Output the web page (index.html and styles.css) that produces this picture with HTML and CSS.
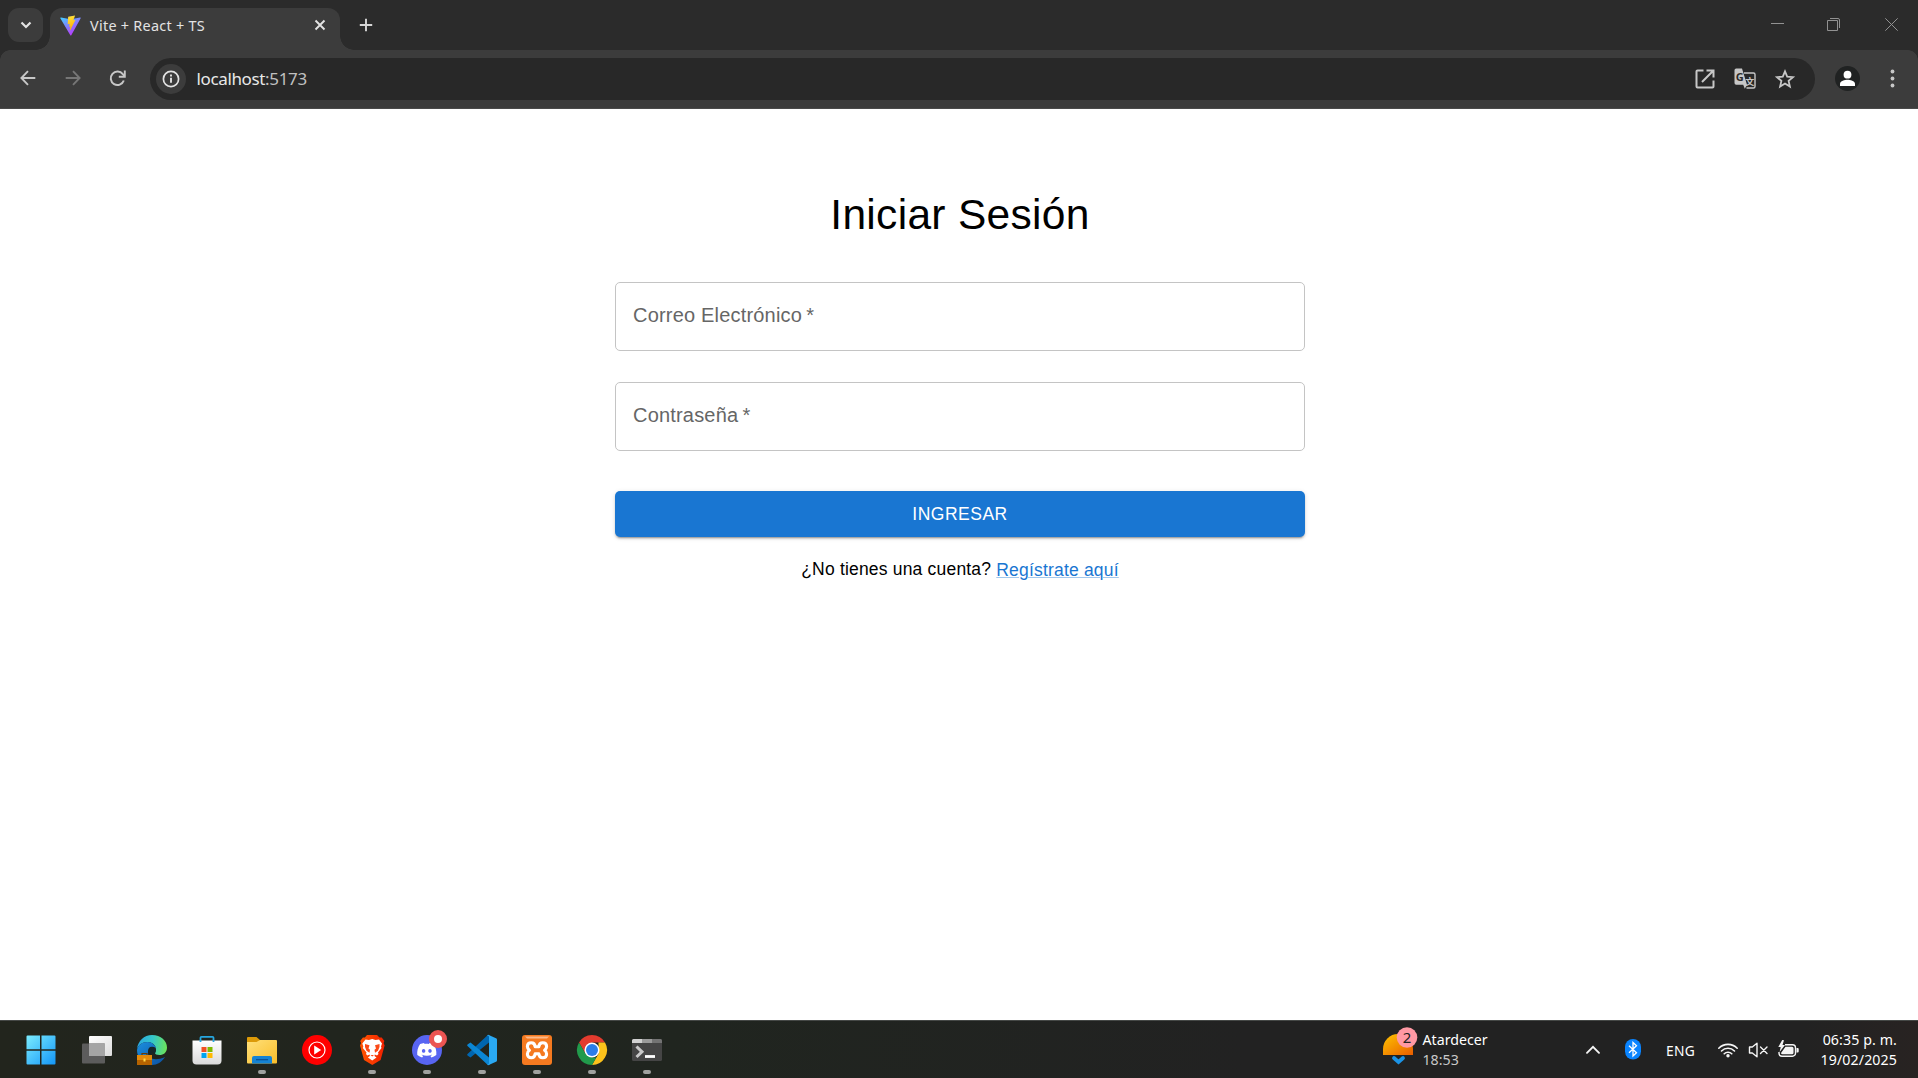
FILE: index.html
```html
<!DOCTYPE html>
<html lang="es">
<head>
<meta charset="utf-8">
<title>Vite + React + TS</title>
<link rel="stylesheet" href="styles.css">
</head>
<body>
<div class="screen">
  <header class="tabstrip">
    <div class="tab-search"><svg width="12" height="8" viewBox="0 0 12 8"><path d="M1.500 1.500 6 6l4.500-4.500" fill="none" stroke="#e3e3e3" stroke-width="2.200"/></svg></div>
    <div class="tab">
      <svg class="favicon" width="21" height="21" viewBox="0 0 32 32">
        <defs>
          <linearGradient id="vp" x1="0" y1="0" x2=".6" y2="1"><stop offset="0" stop-color="#41d1ff"/><stop offset="1" stop-color="#bd34fe"/></linearGradient>
          <linearGradient id="vy" x1="0.4" y1="0" x2=".6" y2="1"><stop offset="0" stop-color="#ffea83"/><stop offset=".1" stop-color="#ffdd35"/><stop offset="1" stop-color="#ffa800"/></linearGradient>
        </defs>
        <path d="M31.500 5 17.200 30.800a.9.9 0 0 1-1.500 0L.5 5a.9.9 0 0 1 1-1.300l14.700 2.600 14.500-2.600a.9.9 0 0 1 .8 1.300z" fill="url(#vp)"/>
        <path d="M23 .8 12.500 2.800l-.8 11.300 3-.6-.8 4.300 2-.5-1.100 5.700c0 .6.500.6.800.2l7.900-15.700-3.200.6z" fill="url(#vy)"/>
      </svg>
      <span class="tab-title">Vite + React + TS</span>
      <svg class="tab-close" width="12" height="12" viewBox="0 0 12 12"><path d="m1.500 1.500 9 9m0-9-9 9" stroke="#e3e3e3" stroke-width="1.900"/></svg>
    </div>
    <svg class="tab-new" width="14" height="14" viewBox="0 0 14 14"><path d="M7 .8v12.400M.8 7h12.400" stroke="#d6d6d6" stroke-width="1.900"/></svg>
    <div class="window-controls">
      <span><svg width="13" height="13" viewBox="0 0 13 13"><path d="M0 5.500h13" stroke="#929292"/></svg></span>
      <span><svg width="13" height="13" viewBox="0 0 13 13"><path d="M.5 2.500h10v10H.5zM3 .5h8a1.500 1.500 0 0 1 1.500 1.500v8" fill="none" stroke="#929292"/></svg></span>
      <span><svg width="13" height="13" viewBox="0 0 13 13"><path d="m.3.3 12.400 12.400m0-12.400L.3 12.700" stroke="#929292"/></svg></span>
    </div>
  </header>

  <div class="toolbar">
    <span class="tool"><svg width="16" height="16" viewBox="0 0 16 16"><path d="M15.300 8H1.800M8 1.200 1.400 8 8 14.800" fill="none" stroke="#c7c7c7" stroke-width="1.900"/></svg></span>
    <span class="tool"><svg width="16" height="16" viewBox="0 0 16 16"><path d="M.7 8h13.500M8 1.200 14.600 8 8 14.800" fill="none" stroke="#767676" stroke-width="1.900"/></svg></span>
    <span class="tool"><svg width="17" height="17" viewBox="0 0 17 17"><path d="M14.800 10.500A6.700 6.700 0 1 1 13.800 4.200L15.500 6" fill="none" stroke="#c7c7c7" stroke-width="2"/><path d="M9.800 6.800h6V.6" fill="none" stroke="#c7c7c7" stroke-width="1.900"/></svg></span>
    <div class="omnibox">
      <span class="site-info"><svg width="18" height="18" viewBox="0 0 18 18"><circle cx="9" cy="9" r="7.600" fill="none" stroke="#e3e3e3" stroke-width="1.700"/><path d="M9 7.800v5M9 4.600v1.900" stroke="#e3e3e3" stroke-width="1.900"/></svg></span>
      <span class="url">localhost<span class="port">:5173</span></span>
      <span class="action"><svg width="20" height="20" viewBox="0 0 20 20"><path d="M8.500 1.500H2.500a1 1 0 0 0-1 1v15a1 1 0 0 0 1 1h15a1 1 0 0 0 1-1v-6M11.500 1.500h7v7M18.200 1.800 7 13" fill="none" stroke="#c7c7c7" stroke-width="2"/></svg></span>
      <span class="action"><svg width="22" height="22" viewBox="0 0 22 22">
        <path d="M10 5h9.500a1.500 1.500 0 0 1 1.500 1.500v12a1.500 1.500 0 0 1-1.500 1.500H12.500" fill="none" stroke="#c7c7c7" stroke-width="1.400"/>
        <path d="M2.200.5H8l5 16.200-2.200 4-1.600-4h-7A1.700 1.700 0 0 1 .5 15V2.200A1.700 1.700 0 0 1 2.200.5z" fill="#c7c7c7"/>
        <text x="1.800" y="13" class="glyph-g">G</text><text x="11.300" y="16.500" class="glyph-cjk">文</text>
      </svg></span>
      <span class="action"><svg width="20" height="20" viewBox="0 0 20 20"><path d="m10 2.300 2.200 5.300 5.800.5-4.400 3.800 1.300 5.700-4.900-3-4.900 3 1.300-5.700L2 8.100l5.800-.5z" fill="none" stroke="#c7c7c7" stroke-width="1.800"/></svg></span>
    </div>
    <span class="tool"><svg width="25" height="25" viewBox="0 0 25 25"><circle cx="12.500" cy="12.500" r="12.500" fill="#202222"/><circle cx="12.500" cy="8.700" r="3.900" fill="#fff"/><path d="M5 20v-2.200c0-2.800 5-4 7.500-4s7.500 1.200 7.500 4V20z" fill="#fff"/></svg></span>
    <span class="tool"><svg width="5" height="19" viewBox="0 0 5 19"><g fill="#c7c7c7"><circle cx="2.500" cy="2.500" r="1.900"/><circle cx="2.500" cy="9.500" r="1.900"/><circle cx="2.500" cy="16.500" r="1.900"/></g></svg></span>
  </div>

  <main class="page">
    <form class="login">
      <h1 class="title">Iniciar Sesión</h1>
      <div class="field">Correo Electrónico<span class="star">&thinsp;*</span></div>
      <div class="field">Contraseña<span class="star">&thinsp;*</span></div>
      <button class="submit" type="button">INGRESAR</button>
      <p class="signup">¿No tienes una cuenta? <a class="link">Regístrate aquí</a></p>
    </form>
  </main>

  <footer class="taskbar">
    <div class="app start"><svg width="30" height="30" viewBox="0 0 30 30"><defs><linearGradient id="win" gradientUnits="userSpaceOnUse" x1="0" y1="0" x2="29" y2="29"><stop offset="0" stop-color="#7deeff"/><stop offset="1" stop-color="#1597f7"/></linearGradient></defs><path d="M1.500.5H14v13.800H.5V1.500a1 1 0 0 1 1-1zM15.500.5h13a1 1 0 0 1 1 1v12.800h-14zM.5 15.700H14v13.800H1.500a1 1 0 0 1-1-1zM15.500 15.700h14v12.800a1 1 0 0 1-1 1h-13z" fill="url(#win)"/></svg></div>
    <div class="app"><svg width="30" height="30" viewBox="0 0 30 30"><defs><linearGradient id="tv" x1="0" y1="0" x2="1" y2="1"><stop offset="0" stop-color="#fff"/><stop offset="1" stop-color="#dcdcdc"/></linearGradient></defs><rect x="7" y="1" width="23" height="20" rx="1" fill="url(#tv)"/><rect x="0" y="8.500" width="23" height="20" rx="1" fill="#5c5c5c"/><path d="M7 8.500h16V21H7z" fill="#a5a5a5"/></svg></div>
    <div class="app"><svg width="30" height="30" viewBox="0 0 30 30"><defs><linearGradient id="eg" x1="0" y1=".4" x2="1" y2=".5"><stop offset="0" stop-color="#2aa8e2"/><stop offset=".5" stop-color="#35c7c9"/><stop offset="1" stop-color="#6be35a"/></linearGradient><linearGradient id="eb" x1="0" y1="0" x2="1" y2="1"><stop offset="0" stop-color="#1b8fe0"/><stop offset="1" stop-color="#0c4f9e"/></linearGradient></defs>
      <path d="M0 14C1 6 7 0 15 0c9 0 15 6 15 12.500 0 5-3.500 7.500-7.500 7.500-3 0-4.500-1-4.500-2 0-.8 1-1.200 1-3.500C19 10 15 7 10.500 7 5 7 1.500 10 0 14z" fill="url(#eg)"/>
      <path d="M0 15C1 10 5 7 10.500 7c5 0 8 3.500 8.500 6.500-2-2.300-7-1.500-8 3C10 23 17 27 28 22c-3 5-8 8-13 8C6 30 0 23 0 15z" fill="url(#eb)"/>
      <circle cx="15" cy="15.500" r="3.800" fill="#172629"/>
      <path d="M15 17v5h12c-4 2-8 1-12-5z" fill="#22251f"/>
      <path d="M5 20v-1.500h5V20" fill="none" stroke="#6b3b00" stroke-width="1.200"/><rect y="20" width="15" height="10" fill="#b56300"/><path d="M0 20h15v5H0z" fill="#e38a0b"/><rect x="6.500" y="23.500" width="2" height="3" fill="#ffd94a"/></svg></div>
    <div class="app"><svg width="30" height="30" viewBox="0 0 30 30"><defs><linearGradient id="st" x1="0" y1="0" x2="0" y2="1"><stop offset="0" stop-color="#fff"/><stop offset="1" stop-color="#dadada"/></linearGradient></defs><path d="M.5 5.500h29v20a4 4 0 0 1-4 4h-21a4 4 0 0 1-4-4z" fill="url(#st)"/><path d="M8.500 7V2.800a1 1 0 0 1 1-1h11a1 1 0 0 1 1 1V7" fill="none" stroke="#26a7e0" stroke-width="1.800"/><path d="M9.500 12h5v5h-5z" fill="#f25022"/><path d="M15.500 12h5v5h-5z" fill="#7fba00"/><path d="M9.500 18h5v5h-5z" fill="#00a4ef"/><path d="M15.500 18h5v5h-5z" fill="#ffb900"/></svg></div>
    <div class="app open"><svg width="30" height="30" viewBox="0 0 30 30"><defs><linearGradient id="fo" x1="0" y1="0" x2="1" y2="1"><stop offset="0" stop-color="#ffe07a"/><stop offset="1" stop-color="#f9be2a"/></linearGradient></defs><path d="M0 8V3a1 1 0 0 1 1-1h8.500l4 3.500L10 8z" fill="#dc9a08"/><path d="M0 7h9.500L13 5h16a1 1 0 0 1 1 1v21.500a1 1 0 0 1-1 1H1a1 1 0 0 1-1-1z" fill="url(#fo)"/><path d="M5 28.500V23a2 2 0 0 1 2-2h16a2 2 0 0 1 2 2v5.500z" fill="#1583d3"/><path d="M9 24.700h12" stroke="#0b4f91" stroke-width="1.200"/></svg></div>
    <div class="app"><svg width="30" height="30" viewBox="0 0 30 30"><circle cx="15" cy="15" r="15" fill="#f00"/><circle cx="15" cy="15" r="8" fill="none" stroke="#fff" stroke-width="1.200"/><path d="m12.200 10.500 7 4.500-7 4.500z" fill="#fff"/></svg></div>
    <div class="app open"><svg width="30" height="30" viewBox="0 0 30 30"><defs><linearGradient id="br"><stop offset="0" stop-color="#ff5500"/><stop offset="1" stop-color="#f22000"/></linearGradient></defs><path d="M10 0h10l2.500 2.500h2.200l2.700 3.500-.8 2 1 2.500-4 14.500L15.300 30 7 25 3 10.500 4 8l-.8-2 2.700-3.500h2z" fill="url(#br)"/><path d="M8.500 4.500 12 5l3.200-1L18.500 5l3.500-.5L25 8.500l-1 3 .5 1.500-3.500 4.500.5 1.500-1.500 1.500-2.200-1-.3 1.500 2 1.500-4.300 3-4.300-3 2-1.500-.3-1.500-2.200 1L9 19l.5-1.500L5.800 13l.5-1.500-1-3z" fill="#fff"/><path d="m8 9 4.500 1.200-1 3.300 1.500 1.300-.5 3-3-2L8 12zM22.500 9 18 10.200l1 3.300-1.500 1.300.5 3 3-2 1.500-3.800zM13.500 20h3.500l-1.800 1.500z" fill="#fb4a18"/></svg></div>
    <div class="app open discord"><svg width="30" height="30" viewBox="0 0 30 30"><circle cx="15" cy="15" r="15" fill="#5865f2"/><path transform="translate(5.200 5.600) scale(.8)" fill="#fff" d="M20.317 4.370a19.800 19.800 0 0 0-4.885-1.515.074.074 0 0 0-.079.037c-.21.375-.444.865-.608 1.250-1.845-.276-3.680-.276-5.487 0-.163-.393-.406-.874-.617-1.250a.077.077 0 0 0-.079-.037A19.740 19.740 0 0 0 3.677 4.370a.07.07 0 0 0-.032.028C.533 9.046-.32 13.580.099 18.058a.082.082 0 0 0 .031.056c2.053 1.508 4.041 2.423 5.993 3.030a.078.078 0 0 0 .084-.028c.462-.63.873-1.295 1.226-1.994a.076.076 0 0 0-.041-.106c-.653-.248-1.275-.55-1.873-.892a.077.077 0 0 1-.007-.128c.126-.094.252-.192.372-.291a.074.074 0 0 1 .077-.01c3.928 1.793 8.180 1.793 12.062 0a.074.074 0 0 1 .078.009c.12.099.246.198.373.292a.077.077 0 0 1-.007.128 12.300 12.300 0 0 1-1.873.891.077.077 0 0 0-.041.107c.36.698.772 1.363 1.225 1.993a.076.076 0 0 0 .084.029c1.961-.607 3.950-1.522 6.003-3.030a.077.077 0 0 0 .031-.055c.5-5.177-.838-9.674-3.549-13.660a.061.061 0 0 0-.031-.029zM8.020 15.331c-1.183 0-2.157-1.086-2.157-2.419s.956-2.419 2.157-2.419c1.211 0 2.176 1.095 2.157 2.419 0 1.333-.956 2.419-2.157 2.419zm7.975 0c-1.183 0-2.157-1.086-2.157-2.419s.956-2.419 2.157-2.419c1.211 0 2.176 1.095 2.157 2.419 0 1.333-.946 2.419-2.157 2.419z"/></svg><i class="ping"></i></div>
    <div class="app open"><svg width="30" height="30" viewBox="0 0 30 30"><path d="M22 7.500 3.500 22.500 .8 20.800a1.200 1.200 0 0 1 0-2L20 .8 22.500 0z" fill="#0066b0"/><path d="M22 22.500 3.500 7.500.8 9.200a1.200 1.200 0 0 0 0 2L20 29.200l2.500.8z" fill="#0b86d4"/><path d="M20 .8a1.600 1.600 0 0 1 2.300-.6L29 3.200a1.600 1.600 0 0 1 1 1.500v20.600a1.600 1.600 0 0 1-1 1.500l-6.700 3a1.600 1.600 0 0 1-2.300-.6 1.400 1.400 0 0 0 2-1.200V2a1.400 1.400 0 0 0-2-1.200z" fill="#2aa9f3"/></svg></div>
    <div class="app open"><svg width="30" height="30" viewBox="0 0 30 30"><rect width="30" height="30" rx="3" fill="#f57a20"/><path d="M3 1.500h24l-2 2H5z" fill="#fbb98a"/><path d="M9.300 7.800c3 0 3.600 1.400 3.900 4h3.600c.3-2.600 1.300-4 3.900-4 2.600 0 3.900 1.800 3.900 3.800 0 1.800-.8 2.800-2 3.700 1.200.9 2 1.900 2 3.600 0 2.200-1.300 3.800-3.900 3.800s-3.600-1.400-3.900-4h-3.600c-.3 2.600-1.300 4-3.900 4s-3.900-1.600-3.900-3.800c0-1.700.8-2.700 2-3.600-1.200-.9-2-1.900-2-3.700 0-2 1.300-3.800 3.900-3.800z" fill="none" stroke="#fff" stroke-width="3.100" stroke-linejoin="round"/></svg></div>
    <div class="app open"><svg width="30" height="30" viewBox="0 0 30 30"><path d="M2 7.500a15 15 0 0 1 26 0H15L8.500 18.800z" fill="#e33b2e"/><path d="M28 7.500A15 15 0 0 1 15 30l6.500-11.200V7.500z" fill="#fcc21b"/><path d="M2 7.500 8.500 18.800 15 22.500h4.300L15 30A15 15 0 0 1 2 7.500z" fill="#219a4b"/><circle cx="15" cy="15" r="7.500" fill="#fff"/><circle cx="15" cy="15" r="6" fill="#2b7de9"/></svg></div>
    <div class="app open"><svg width="30" height="30" viewBox="0 0 30 30"><rect y="4" width="30" height="22" rx="1.500" fill="#454545"/><path d="M0 8V5.500A1.500 1.500 0 0 1 1.500 4H10v4z" fill="#d2d2d2"/><path d="M10 4h10v4H10z" fill="#9b9b9b"/><path d="M20 4h8.500A1.500 1.500 0 0 1 30 5.500V8H20z" fill="#737373"/><path d="m4.500 11.500 5.500 5.300L4.500 22" fill="none" stroke="#c9c9c9" stroke-width="3"/><path d="M13 21.500h10" stroke="#fff" stroke-width="2.800"/></svg></div>

    <div class="weather">
      <svg width="36" height="38" viewBox="0 0 36 38"><defs><linearGradient id="sun" x1="0" y1="0" x2="1" y2="1"><stop offset="0" stop-color="#ffc400"/><stop offset="1" stop-color="#e85d00"/></linearGradient></defs><path d="M0 28v-6a15 15 0 0 1 30 0v6z" fill="url(#sun)"/><path d="m11 31 4.500 4 4.500-4" fill="none" stroke="#1b93e6" stroke-width="3.800" stroke-linecap="round"/><circle cx="24" cy="10.500" r="10.300" fill="#ff99a4"/><text x="24" y="16" text-anchor="middle" class="badge-text">2</text></svg>
      <div class="weather-text"><div>Atardecer</div><div class="dim">18:53</div></div>
    </div>
    <div class="tray">
      <svg class="more" width="14" height="9" viewBox="0 0 14 9"><path d="m1 7.800 6-6 6 6" fill="none" stroke="#f5f5f5" stroke-width="1.900" stroke-linecap="round"/></svg>
      <svg class="bt" width="16" height="21" viewBox="0 0 16 21"><rect width="16" height="20.500" rx="8" fill="#0a84ff"/><path d="m4 6.700 7.500 7L8 17V3.500l3.500 3.300-7.500 7" fill="none" stroke="#fff" stroke-width="1.300"/></svg>
      <span class="lang">ENG</span>
      <svg class="wifi" width="20" height="16" viewBox="0 0 20 16"><path d="M.8 6.200a13 13 0 0 1 18.400 0M3.500 9a9.200 9.200 0 0 1 13 0M6.200 11.800a5.400 5.400 0 0 1 7.600 0" fill="none" stroke="#f5f5f5" stroke-width="1.600" stroke-linecap="round"/><circle cx="10" cy="13.800" r="1.700" fill="#f5f5f5"/></svg>
      <svg class="vol" width="20" height="16" viewBox="0 0 20 16"><path d="M1.500 5v6h2.800l4.700 3.800V1.200L4.300 5zM12.500 5l6.500 6.500M19 5l-6.500 6.500" fill="none" stroke="#f5f5f5" stroke-width="1.400" stroke-linejoin="round" stroke-linecap="round"/></svg>
      <svg class="bat" width="21" height="18" viewBox="0 0 21 18"><path d="M7 4.700h7.500a3 3 0 0 1 3 3v5.500a3 3 0 0 1-3 3H4a3 3 0 0 1-3-3V12" fill="none" stroke="#f5f5f5" stroke-width="1.400"/><path d="M7.500 6.800H14a1.500 1.500 0 0 1 1.500 1.500v4.500a1.500 1.500 0 0 1-1.500 1.500H4.500a1.500 1.500 0 0 1-1.500-1.200zM18.500 8h1.200q1 0 1 1v2.500q0 1-1 1h-1.200zM4.200 0 .3 7h2.400L1.600 12 7 5H4.500L6 .3z" fill="#f5f5f5"/></svg>
      <div class="clock"><div>06:35 p. m.</div><div>19/02/2025</div></div>
    </div>
  </footer>
</div>
</body>
</html>
```
FILE: styles.css
```css
* { box-sizing: border-box; }
body { margin: 0; background: #fff; font-family: "Noto Sans", sans-serif; overflow: hidden; }
svg { display: block; flex: none; overflow: visible; }

.screen { display: flex; flex-direction: column; width: 1918px; height: 1078px; }

/* Tab strip */
.tabstrip { display: flex; align-items: flex-start; height: 50px; padding: 8px 0 0 8px; background: #2b2b2b; flex: none; }
.tab-search { display: flex; align-items: center; justify-content: center; width: 35px; height: 34px; border-radius: 11px; background: #3c3c3c; }
.tab { position: relative; display: flex; align-items: center; width: 290px; height: 42px; margin-left: 7px; padding: 0 14px 8px 10px; border-radius: 12px 12px 0 0; background: #3c3c3c; }
.tab::before, .tab::after { content: ""; position: absolute; bottom: 0; width: 14px; height: 14px; }
.tab::before { left: -14px; background: radial-gradient(circle at 0 0, transparent 13.5px, #3c3c3c 14px); }
.tab::after { right: -14px; background: radial-gradient(circle at 100% 0, transparent 13.5px, #3c3c3c 14px); }
.tab-title { flex: 1; margin-left: 9px; padding-top: 1px; color: #e3e3e3; font-size: 14.4px; letter-spacing: .28px; line-height: 20px; white-space: nowrap; }
.tab-new { margin: 10px 0 0 19px; }
.window-controls { display: flex; margin: 10px -2px 0 auto; }
.window-controls span { display: flex; justify-content: center; width: 57px; }
.window-controls span:nth-child(2) { padding-right: 2px; }

/* Toolbar */
.toolbar { display: flex; align-items: center; height: 59px; padding: 0 3px 2px 5px; flex: none; border-bottom: 1px solid #4a4a4a; background: radial-gradient(circle at 10px 10px, #3c3c3c 9.5px, #2b2b2b 10px) 0 0 / 10px 10px no-repeat, radial-gradient(circle at 0 10px, #3c3c3c 9.5px, #2b2b2b 10px) 100% 0 / 10px 10px no-repeat, #3c3c3c; }
.tool { display: flex; align-items: center; justify-content: center; width: 45px; }
.omnibox { display: flex; align-items: center; flex: 1; height: 42px; margin: 1px 10px 0; padding: 0 10px 0 6px; border-radius: 21px; background: #282828; }
.site-info { display: flex; align-items: center; justify-content: center; width: 30px; height: 30px; border-radius: 50%; background: #3c3c3c; }
.url { flex: 1; margin-left: 10.5px; padding-top: 1px; color: #e8e8e8; font-size: 17px; letter-spacing: -.36px; line-height: 24px; }
.port { color: #c0c0c0; }
.action { display: flex; justify-content: center; width: 40px; }
.glyph-g { font: 700 11px "Open Sans", sans-serif; fill: #2b2b2b; }
.glyph-cjk { font: 700 9px "Noto Sans CJK SC", sans-serif; fill: #c7c7c7; }

/* Login page */
.page { display: flex; justify-content: center; align-items: flex-start; flex: 1; background: #fff; font-family: "Liberation Sans", Arial, sans-serif; }
.login { display: flex; flex-direction: column; width: 690px; margin: 79px 0 0 2px; }
.title { margin: 0 0 41px; text-align: center; font-size: 42.5px; font-weight: 400; line-height: 53px; letter-spacing: .31px; color: #000; }
.field { display: flex; align-items: center; height: 69px; margin-bottom: 31px; padding: 0 17px 2px; border: 1px solid #c4c4c4; border-radius: 5px; color: #666; font-size: 20px; letter-spacing: .19px; }
.star { white-space: pre; }
.submit { height: 46px; margin-top: 9px; padding: 0; border: 0; border-radius: 5px; background: #1976d2; color: #fff; font: 400 17.5px "Liberation Sans", Arial, sans-serif; letter-spacing: .5px; box-shadow: 0 3px 1px -2px rgba(0,0,0,.2), 0 2px 2px rgba(0,0,0,.14), 0 1px 5px rgba(0,0,0,.12); }
.signup { margin: 20px 0 0; text-align: center; font-size: 17.5px; line-height: 25px; letter-spacing: .19px; color: #000; }
.link { position: relative; top: 1px; color: #1976d2; text-decoration: underline; text-decoration-color: rgba(25,118,210,.4); text-decoration-thickness: 1px; }

/* Taskbar */
.taskbar { display: flex; height: 58px; padding: 0 21px 0 13px; flex: none; border-top: 1px solid #454846; background: linear-gradient(90deg, #22251d, #20251f 35%, #222 65%, #222 94%, #282322); color: #fff; font-size: 14.2px; line-height: 20px; }
.app { position: relative; display: flex; justify-content: center; width: 55px; padding-top: 14px; flex: none; }
.start { margin-right: 1.5px; }
.open::after { content: ""; position: absolute; left: 23.5px; top: 49px; width: 8px; height: 4px; border-radius: 2px; background: #a0a19f; }
.ping { position: absolute; left: 29px; top: 9px; width: 18px; height: 18px; border: 5px solid #ec5553; border-radius: 50%; background: #fff; }
.weather { display: flex; margin-left: 708px; padding-top: 6px; }
.weather-text { margin: 3px 0 0 4px; }
.dim { color: #c8c8c8; }
.badge-text { font: 15px "Noto Sans", sans-serif; fill: #222; }
.tray { display: flex; align-items: center; margin-left: auto; }
.bt { margin-left: 25px; }
.lang { margin: 2px 0 0 25px; width: 30px; font-size: 13.8px; letter-spacing: .3px; }
.wifi { margin-left: 22px; }
.vol { margin-left: 10px; }
.bat { margin: -2px 0 0 10px; }
.clock { width: 98px; text-align: right; letter-spacing: .1px; }
```
